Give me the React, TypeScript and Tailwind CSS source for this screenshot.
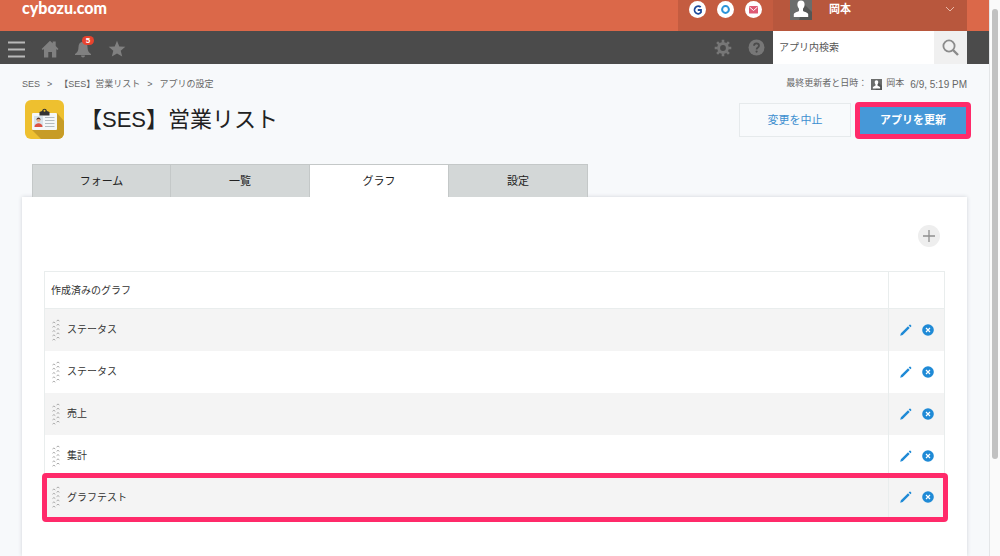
import { useState } from "react";

type Crumb = { label: string; href: string };

const CRUMBS: Crumb[] = [
  { label: "SES", href: "#space" },
  { label: "【SES】営業リスト", href: "#app" },
  { label: "アプリの設定", href: "#settings" },
];

const TABS = ["フォーム", "一覧", "グラフ", "設定"];

const GRAPHS = [
  { id: 1, name: "ステータス", highlighted: false },
  { id: 2, name: "ステータス", highlighted: false },
  { id: 3, name: "売上", highlighted: false },
  { id: 4, name: "集計", highlighted: false },
  { id: 5, name: "グラフテスト", highlighted: true },
];

const GRIP_ROWS = [0, 1, 2, 3, 4];

function UserSilhouette({ className }: { className: string }) {
  return (
    <svg viewBox="0 0 22 22" className={className} aria-hidden="true">
      <rect width="22" height="22" fill="#6b6d6c" />
      <path d="M14 6l8 8v8H9z" fill="#545655" />
      <path
        d="M11 2.5c-2.3 0-3.6 1.6-3.6 4 0 1.700.6 3.200 1.600 4.200v2.100c0 .8-4.800 1.700-5.200 3.400V19h14.400v-2.800c-.4-1.700-5.200-2.600-5.200-3.400v-2.100c1-1 1.600-2.500 1.600-4.200 0-2.400-1.300-4-3.600-4z"
        fill="#fff"
      />
    </svg>
  );
}

function AppIcon() {
  return (
    <svg viewBox="0 0 39 39" className="size-[39px]" aria-hidden="true">
      <rect width="39" height="39" rx="6" fill="#eec02f" />
      <path d="M32 13l7 8v12a6 6 0 0 1-6 6H16L7 30z" fill="#c79c26" />
      <rect x="7" y="13" width="25" height="17" rx="1" fill="#f4f7f9" />
      <rect x="9" y="16" width="9" height="11" fill="#d7e3ec" />
      <circle cx="13.500" cy="20" r="2" fill="#e9b08e" />
      <path d="M11.500 20c-.3-3.500 4.300-3.500 4 0-.8-1.300-3-1.300-4 0z" fill="#4d3430" />
      <path d="M9.500 27c0-5 8-5 8 0z" fill="#dc5244" />
      <path d="M20 17.500h9.500M20 20.500h9.500M20 23.500h9.500M20 26.500h9.500" stroke="#b4bcc2" />
      <path d="M14.500 15.500v-3.500l2.500-1a2.600 3 0 0 1 5 0l2.500 1v3.500z" fill="#333" />
      <circle cx="19.500" cy="10.800" r="1" fill="#eec02f" />
    </svg>
  );
}

function TopBar() {
  return (
    <header className="flex h-[31px] bg-[#db6849] text-white">
      <a href="#top" className="flex-1 pl-[22px] font-['Lato','Noto_Sans_CJK_JP',sans-serif] text-base leading-4 font-black">
        cybozu.com
      </a>
      <nav aria-label="サービス" className="flex w-[95px] gap-[11px] bg-[#c45c40] pt-px pl-[11px]">
        <a href="#garoon" aria-label="Garoon">
          <svg viewBox="0 0 17 17" className="size-[17px]">
            <circle cx="8.500" cy="8.500" r="8.500" fill="#fff" />
            <path d="M11.700 6.200A3.600 3.900 0 1 0 12 11.300V9H8.800" fill="none" stroke="#1d4a9a" strokeWidth="1.800" />
          </svg>
        </a>
        <a href="#office" aria-label="Office">
          <svg viewBox="0 0 17 17" className="size-[17px]">
            <circle cx="8.500" cy="8.500" r="8.500" fill="#fff" />
            <circle cx="8.500" cy="8.500" r="3.400" fill="none" stroke="#2a93d8" strokeWidth="2" />
          </svg>
        </a>
        <a href="#mail" aria-label="メール">
          <svg viewBox="0 0 17 17" className="size-[17px]">
            <circle cx="8.500" cy="8.500" r="8.500" fill="#fff" />
            <rect x="4" y="5" width="9" height="7.500" rx=".5" fill="#df5b75" />
            <path d="M4.500 6l4 3.500 4-3.500" fill="none" stroke="#fff" strokeWidth="1" />
          </svg>
        </a>
      </nav>
      <button type="button" className="mr-[22px] flex w-[194px] items-start bg-[#b8573d] pr-3 pl-[17px] text-[11px] font-bold">
        <UserSilhouette className="-mt-0.5 size-[22px]" />
        <span className="ml-[17px] flex-1 text-left leading-[18px]">岡本</span>
        <svg viewBox="0 0 10 6" className="mt-1.5 h-1.5 w-2.5" aria-hidden="true">
          <path d="M1 1l4 4 4-4" fill="none" stroke="#e8b8a8" />
        </svg>
      </button>
    </header>
  );
}

function ToolBar() {
  return (
    <div className="flex h-[33px] items-stretch bg-[#4b4b4b] text-[#808080]">
      <div className="flex flex-1 items-center pt-[3px] pl-2">
        <button type="button" aria-label="メニュー" className="w-[17px] text-[#b9b9b9]">
          <svg viewBox="0 0 17 17" className="size-[17px]">
            <path d="M0 1.500h17M0 8.500h17M0 15.500h17" stroke="currentColor" strokeWidth="2" />
          </svg>
        </button>
        <a href="#home" aria-label="ホーム" className="ml-4">
          <svg viewBox="0 0 18 18" className="size-[18px]" fill="currentColor">
            <path d="M9 .8l2.700 2.500V1.500h3v4.600L17.500 9l-1.200 1-1-1v8.500h-4.300v-5.500H7.300v5.500H3V9L1.800 10 .6 9z" />
          </svg>
        </a>
        <button type="button" aria-label="通知 5件" className="relative ml-[15px]">
          <svg viewBox="0 0 18 18" className="size-[18px]" fill="currentColor">
            <path d="M9 1.500c-3 .5-4.500 2.500-4.500 5.500 0 3.500-1 5.500-3.500 7v1h16v-1c-2.500-1.500-3.500-3.500-3.500-7 0-3-1.500-5-4.500-5.500zM7 15.500h4c0 2.500-4 2.500-4 0z" />
          </svg>
          <span className="absolute -top-1 left-2 flex h-[9px] w-3 items-center justify-center rounded-full bg-[#e8432e] text-[8px] leading-none font-bold text-white">
            5
          </span>
        </button>
        <button type="button" aria-label="ブックマーク" className="ml-4">
          <svg viewBox="0 0 18 18" className="size-[18px]" fill="currentColor">
            <path d="M9 .8l2.300 5.600 6 .4-4.600 3.900 1.500 5.900L9 13.400l-5.200 3.200 1.500-5.900L.7 6.800l6-.4z" />
          </svg>
        </button>
      </div>
      <div className="flex items-center gap-4 pr-2">
        <button type="button" aria-label="設定メニュー">
          <svg viewBox="0 0 18 18" className="size-[18px]">
            <circle cx="9" cy="9" r="4.400" fill="none" stroke="#777" strokeWidth="3" />
            <path
              d="M9 .7v3M9 14.300v3M.7 9h3M14.300 9h3M3.100 3.100l2.200 2.200M12.700 12.700l2.200 2.200M3.100 14.900l2.200-2.200M12.700 5.300l2.200-2.200"
              stroke="#777"
              strokeWidth="2.600"
            />
          </svg>
        </button>
        <button type="button" aria-label="ヘルプ">
          <svg viewBox="0 0 17 17" className="size-[17px]">
            <circle cx="8.500" cy="8.500" r="8" fill="#777" />
            <path d="M6 6.700c.1-3.200 5-3.200 5 0 0 1.700-2.400 1.800-2.400 3.700" fill="none" stroke="#4b4b4b" strokeWidth="1.800" />
            <circle cx="8.600" cy="12.600" r="1.100" fill="#4b4b4b" />
          </svg>
        </button>
      </div>
      <form className="mr-[22px] flex w-[194px] bg-white" role="search" onSubmit={(e) => e.preventDefault()}>
        <input
          type="text"
          aria-label="アプリ内検索"
          placeholder="アプリ内検索"
          className="min-w-0 flex-1 pl-1.5 text-[10px] text-[#555] outline-none placeholder:text-[#555]"
        />
        <button type="submit" aria-label="検索" className="flex w-[33px] items-center justify-center bg-[#f0f0f0]">
          <svg viewBox="0 0 17 17" className="size-[17px]" fill="none" stroke="#8b8b8b">
            <circle cx="7" cy="7" r="5.600" strokeWidth="1.800" />
            <path d="M11 11l5 5" strokeWidth="2.400" />
          </svg>
        </button>
      </form>
    </div>
  );
}

function PageHeading() {
  return (
    <div className="flex justify-between px-[22px] pt-3">
      <div>
        <nav aria-label="パンくず" className="flex h-[18px] items-center text-[9px] text-[#666]">
          {CRUMBS.map((c, i) => (
            <span key={c.label} className="flex">
              {i > 0 && <span className="mx-[7px]">&gt;</span>}
              <a href={c.href}>{c.label}</a>
            </span>
          ))}
        </nav>
        <div className="mt-1.5 ml-[3px] flex items-center">
          <AppIcon />
          <h1 className="ml-4 text-[22px] leading-8 text-[#222]">【SES】営業リスト</h1>
        </div>
      </div>
      <div className="flex flex-col items-end">
        <div className="flex h-4 items-center text-[9px] text-[#666]">
          最終更新者と日時：
          <UserSilhouette className="ml-1 size-[11px]" />
          <span className="ml-1">岡本</span>
          <time className="ml-1.5 text-[10px]">6/9, 5:19 PM</time>
        </div>
        <div className="mt-[11px] flex items-center gap-2 text-[11px]">
          <button type="button" className="h-[34px] w-[112px] border border-[#e6eaec] bg-[#f8fafc] text-[#3c8fd0]">
            変更を中止
          </button>
          <span className="relative">
            <button type="button" className="block h-[34px] w-[108px] bg-[#4698d8] font-bold text-white">
              アプリを更新
            </button>
            <span className="pointer-events-none absolute -inset-x-1 -top-px -bottom-0.5 rounded-sm border-5 border-[#ff2a6a]" />
          </span>
        </div>
      </div>
    </div>
  );
}

function Grip() {
  return (
    <svg viewBox="0 0 8 22" className="h-[22px] w-2 cursor-move" fill="none" stroke="#aaa" aria-hidden="true">
      {GRIP_ROWS.map((n) => (
        <path key={n} d={`M.5 ${n * 4.3 + 4}l1.400-1 1.400 1M4.600 ${n * 4.3 + 2}l1.400-1 1.400 1`} />
      ))}
    </svg>
  );
}

function GraphTable() {
  return (
    <table className="w-full border-collapse border border-[#e9eded] text-[10px] text-[#333]">
      <thead>
        <tr className="h-[37px] border-b border-[#e9eded]">
          <th scope="col" className="pl-1.5 text-left font-normal">作成済みのグラフ</th>
          <td className="w-14 border-l border-[#e9eded]" />
        </tr>
      </thead>
      <tbody>
        {GRAPHS.map((g) => (
          <tr key={g.id} className="relative h-[42px] odd:bg-[#f4f4f4]">
            <td className="pl-[7px]">
              <div className="flex items-center gap-[7px]">
                <Grip />
                {g.name}
              </div>
              {g.highlighted && (
                <span className="pointer-events-none absolute -inset-x-[3px] -top-1 -bottom-[3px] rounded-sm border-5 border-[#ff2a6a]" />
              )}
            </td>
            <td className="border-l border-[#e9eded]">
              <div className="flex items-center justify-center gap-2.5">
                <button type="button" aria-label={`${g.name}を編集`}>
                  <svg viewBox="0 0 12 12" className="size-3" fill="#1f8ad6">
                    <path d="M.2 11.800l.7-2.600L8 2.300l1.700 1.700-7 7zM8.700 1.600l.8-.8q.5-.4 1 0l.7.7q.4.500 0 1l-.8.800z" />
                  </svg>
                </button>
                <button type="button" aria-label={`${g.name}を削除`}>
                  <svg viewBox="0 0 12 12" className="size-3">
                    <circle cx="6" cy="6" r="5.800" fill="#1f8ad6" />
                    <path d="M4 4l4 4M8 4l-4 4" stroke="#fff" strokeWidth="1.200" />
                  </svg>
                </button>
              </div>
            </td>
          </tr>
        ))}
      </tbody>
    </table>
  );
}

export default function App() {
  const [active, setActive] = useState("グラフ");

  return (
    <div className="flex min-h-screen bg-[#f7f9fb] font-['Liberation_Sans','Noto_Sans_CJK_JP',sans-serif]">
      <div className="flex min-w-0 flex-1 flex-col">
        <TopBar />
        <ToolBar />
        <PageHeading />
        <main className="mt-[25px] flex flex-1 flex-col px-[22px]">
          <div role="tablist" className="z-10 ml-2.5 flex text-[11px] text-[#222]">
            {TABS.map((tab) => (
              <button
                key={tab}
                type="button"
                role="tab"
                aria-selected={tab === active}
                onClick={() => setActive(tab)}
                className={`h-[33px] w-[139px] border-t border-r border-[#c4c8c8] first:border-l ${
                  tab === active ? "bg-white" : "bg-[#d3d7d7]"
                }`}
              >
                {tab}
              </button>
            ))}
          </div>
          <section className="flex-1 bg-white px-[22px] pb-8 shadow-[0_0_4px_#d0d4d8]">
            <div className="flex justify-end pt-7 pr-[5px] pb-6">
              <button type="button" aria-label="グラフを追加" className="flex size-[22px] items-center justify-center rounded-full bg-[#eee]">
                <svg viewBox="0 0 12 12" className="size-3" stroke="#8f8f8f" strokeWidth="1.300">
                  <path d="M6 0v12M0 6h12" />
                </svg>
              </button>
            </div>
            <GraphTable />
          </section>
        </main>
      </div>
      <div className="w-[11px] border-l border-[#e4e6e8] bg-[#fafafa] pt-[9px] pl-0.5" aria-hidden="true">
        <div className="h-[450px] w-1.5 rounded-full bg-[#c1c1c1]" />
      </div>
    </div>
  );
}
